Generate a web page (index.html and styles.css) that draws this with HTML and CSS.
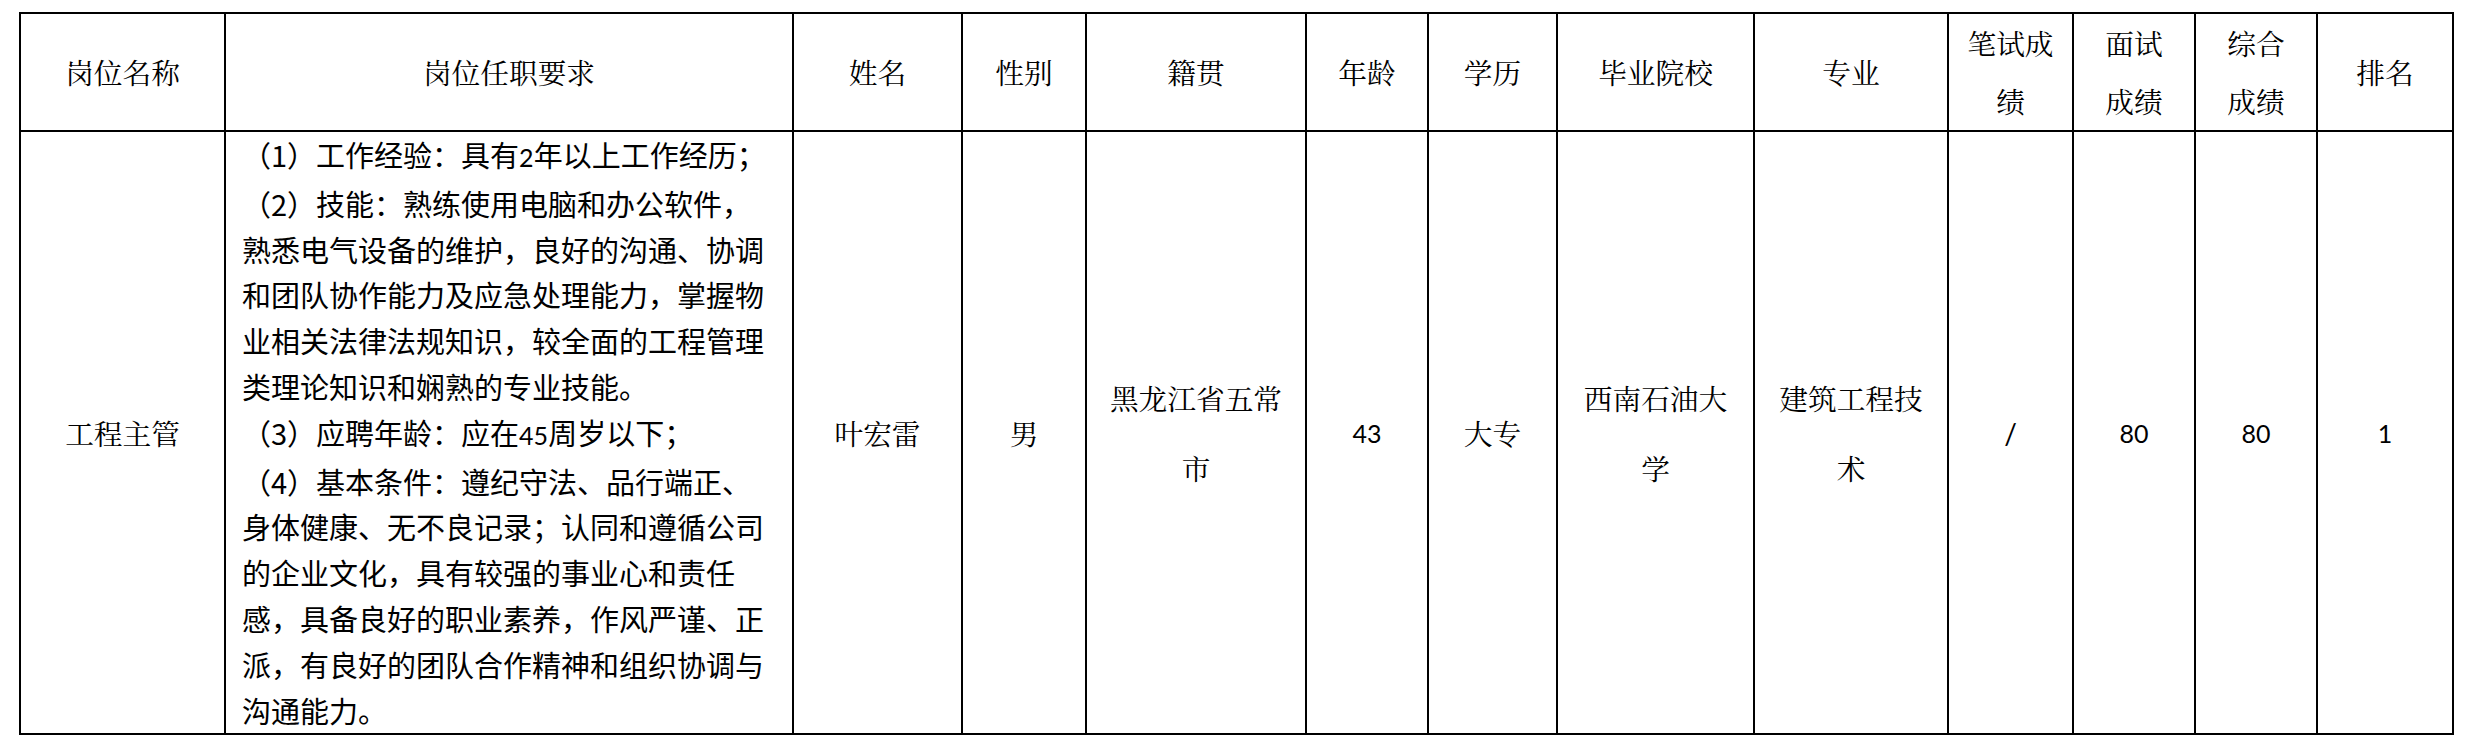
FILE: index.html
```html
<!DOCTYPE html>
<html lang="zh-CN">
<head>
<meta charset="utf-8">
<title>岗位任职要求</title>
<link rel="stylesheet" href="styles.css">
</head>
<body>
<table class="grid">
  <colgroup>
    <col class="w-name"><col class="w-req"><col class="w-person"><col class="w-sex"><col class="w-origin"><col class="w-age"><col class="w-edu"><col class="w-school"><col class="w-major"><col class="w-written"><col class="w-interview"><col class="w-total"><col class="w-rank">
  </colgroup>
  <thead>
    <tr class="head">
      <th>岗位名称</th>
      <th>岗位任职要求</th>
      <th>姓名</th>
      <th>性别</th>
      <th>籍贯</th>
      <th>年龄</th>
      <th>学历</th>
      <th>毕业院校</th>
      <th>专业</th>
      <th class="two">笔试成<br>绩</th>
      <th class="two">面试<br>成绩</th>
      <th class="two">综合<br>成绩</th>
      <th>排名</th>
    </tr>
  </thead>
  <tbody>
    <tr class="body">
      <td class="song">工程主管</td>
      <td class="req">（1）工作经验：具有<span class="lat">2</span>年以上工作经历；<br>（2）技能：熟练使用电脑和办公软件，<br>熟悉电气设备的维护，良好的沟通、协调<br>和团队协作能力及应急处理能力，掌握物<br>业相关法律法规知识，较全面的工程管理<br>类理论知识和娴熟的专业技能。<br>（3）应聘年龄：应在<span class="lat">45</span>周岁以下；<br>（4）基本条件：遵纪守法、品行端正、<br>身体健康、无不良记录；认同和遵循公司<br>的企业文化，具有较强的事业心和责任<br>感，具备良好的职业素养，作风严谨、正<br>派，有良好的团队合作精神和组织协调与<br>沟通能力。</td>
      <td class="song">叶宏雷</td>
      <td class="song">男</td>
      <td class="song">黑龙江省五常<br>市</td>
      <td class="num">43</td>
      <td class="song">大专</td>
      <td class="song">西南石油大<br>学</td>
      <td class="song">建筑工程技<br>术</td>
      <td class="num slash">/</td>
      <td class="num">80</td>
      <td class="num">80</td>
      <td class="num">1</td>
    </tr>
  </tbody>
</table>
</body>
</html>
```

FILE: styles.css
```css
html, body {
  margin: 0;
  padding: 0;
  background: #ffffff;
}

body {
  color: #000000;
  font-family: "Noto Serif CJK SC", "Noto Sans CJK SC", sans-serif;
}

.grid {
  border-collapse: collapse;
  table-layout: fixed;
  width: 2435px;
  margin: 12px 0 0 19px;
}

.w-name { width: 205px; }
.w-req { width: 568px; }
.w-person { width: 169px; }
.w-sex { width: 124px; }
.w-origin { width: 220px; }
.w-age { width: 122px; }
.w-edu { width: 129px; }
.w-school { width: 197px; }
.w-major { width: 194px; }
.w-written { width: 125px; }
.w-interview { width: 122px; }
.w-total { width: 122px; }
.w-rank { width: 136px; }

.grid th,
.grid td {
  border: 2px solid #000000;
  padding: 0;
  text-align: center;
  vertical-align: middle;
}

.head {
  height: 118px;
}

.grid th {
  font-weight: 400;
  font-size: 28.7px;
  line-height: 40px;
  font-family: "Noto Serif CJK SC", "Noto Sans CJK SC", sans-serif;
}

.grid th.two {
  line-height: 58px;
}

.song {
  font-size: 28.7px;
  line-height: 70px;
  font-family: "Noto Serif CJK SC", "Noto Sans CJK SC", sans-serif;
}

.num {
  font-family: Lato, "Noto Sans CJK SC", sans-serif;
  font-size: 25px;
  line-height: 40px;
}

.slash {
  font-size: 28px;
}

.grid td.req {
  text-align: left;
  vertical-align: top;
  padding: 0 0 0 16px;
  font-family: "Noto Sans CJK SC", sans-serif;
  font-size: 29px;
  line-height: 45.8px;
  white-space: nowrap;
}

.lat {
  font-family: Lato, sans-serif;
  font-size: 25px;
}
```
